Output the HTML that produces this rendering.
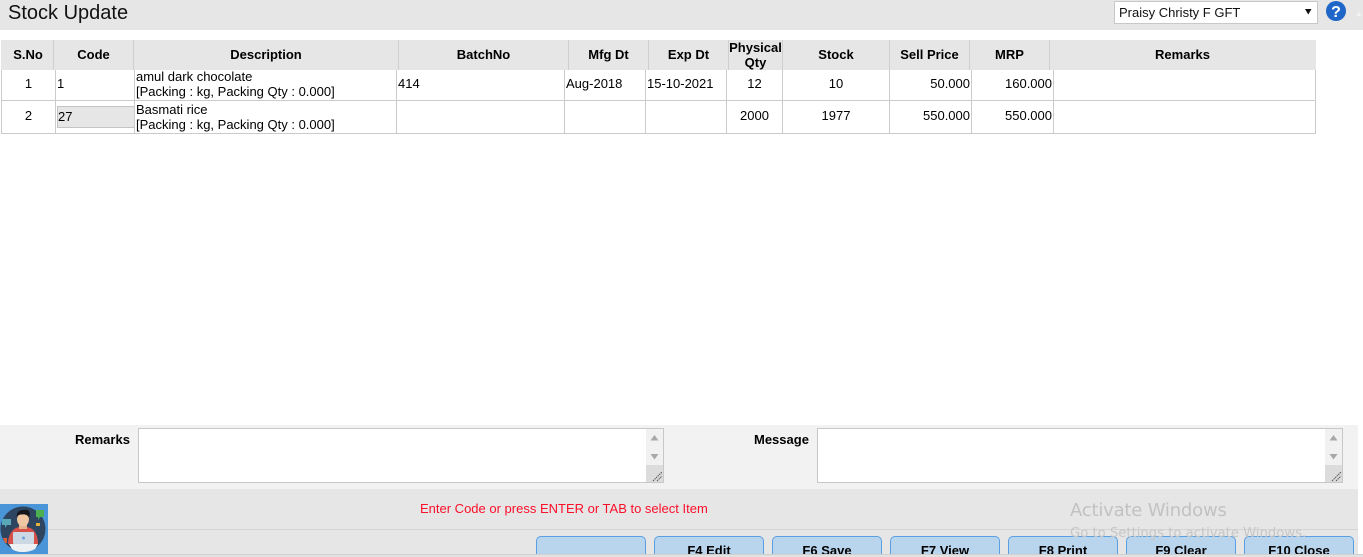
<!DOCTYPE html>
<html>
<head>
<meta charset="utf-8">
<style>
html,body{margin:0;padding:0;width:1363px;height:557px;overflow:hidden;background:#fff;font-family:"Liberation Sans",Arial,sans-serif;font-size:13px;color:#000}
#page{position:absolute;left:0;top:0;width:1363px;height:557px;overflow:hidden}
#clip{position:absolute;left:0;top:0;width:1363px;height:554px;overflow:hidden}
.a{position:absolute;white-space:nowrap}
.bg{position:absolute}
.h{position:absolute;top:40px;height:30px;line-height:29px;font-weight:bold;text-align:center;color:#000}
.t{position:absolute;white-space:nowrap;line-height:16px}
.c{text-align:center}
.r{text-align:right}
.btn{position:absolute;top:536px;width:108px;height:30px;background:#b9d4ed;border:1px solid #5a9fe0;border-radius:5px;text-align:center;font-weight:bold;line-height:27px;color:#000}
.ta{position:absolute;top:428px;height:53px;background:#fff;border:1px solid #c8c8c8}
.sb{position:absolute;top:0;right:0;width:17px;height:53px;background:#f1f1f1}
.grip{position:absolute;right:0;bottom:0;width:17px;height:17px;background:#dcdcdc}
</style>
</head>
<body>
<div id="page">
<div id="clip">
<div class="bg" style="left:0;top:0;width:1363px;height:30px;background:#e6e6e6"></div>
<div class="a" style="left:8px;top:1px;font-size:20px;line-height:24px;color:#111">Stock Update</div>

<div class="a" style="left:1114px;top:1px;width:202px;height:21px;background:#fff;border:1px solid #c8c8c8;line-height:21px;text-indent:4px;color:#111">Praisy Christy F GFT</div>
<svg class="a" style="left:1305px;top:9px" width="7" height="6"><path d="M0 0H6.500L3.250 5.500Z" fill="#111"/></svg>
<svg class="a" style="left:1326px;top:1px" width="20" height="20"><circle cx="10" cy="10" r="10" fill="#1e66c8"/><text x="10" y="16" font-family="Liberation Sans" font-size="16" font-weight="bold" fill="#fff" text-anchor="middle">?</text></svg>
<svg class="a" style="left:1356px;top:11px" width="5" height="5"><path d="M0 5L3 0L5 5Z" fill="#f2f2f2"/></svg>

<!-- table header -->
<div class="bg" style="left:1px;top:40px;width:1315px;height:30px;background:#e6e6e6"></div>
<div class="bg" style="left:53px;top:40px;width:1px;height:30px;background:#cfcfcf"></div>
<div class="bg" style="left:133px;top:40px;width:1px;height:30px;background:#cfcfcf"></div>
<div class="bg" style="left:398px;top:40px;width:1px;height:30px;background:#cfcfcf"></div>
<div class="bg" style="left:568px;top:40px;width:1px;height:30px;background:#cfcfcf"></div>
<div class="bg" style="left:648px;top:40px;width:1px;height:30px;background:#cfcfcf"></div>
<div class="bg" style="left:728px;top:40px;width:1px;height:30px;background:#cfcfcf"></div>
<div class="bg" style="left:782px;top:40px;width:1px;height:30px;background:#cfcfcf"></div>
<div class="bg" style="left:889px;top:40px;width:1px;height:30px;background:#cfcfcf"></div>
<div class="bg" style="left:969px;top:40px;width:1px;height:30px;background:#cfcfcf"></div>
<div class="bg" style="left:1049px;top:40px;width:1px;height:30px;background:#cfcfcf"></div>

<div class="h" style="left:2px;width:52px">S.No</div>
<div class="h" style="left:54px;width:79px">Code</div>
<div class="h" style="left:134px;width:264px">Description</div>
<div class="h" style="left:399px;width:169px">BatchNo</div>
<div class="h" style="left:569px;width:79px">Mfg Dt</div>
<div class="h" style="left:649px;width:79px">Exp Dt</div>
<div class="h" style="left:729px;width:53px;line-height:15px">Physical<br>Qty</div>
<div class="h" style="left:783px;width:106px">Stock</div>
<div class="h" style="left:890px;width:79px">Sell Price</div>
<div class="h" style="left:970px;width:79px">MRP</div>
<div class="h" style="left:1050px;width:265px">Remarks</div>

<!-- grid -->
<div class="bg" style="left:1px;top:100px;width:1315px;height:1px;background:#cbcbcb"></div>
<div class="bg" style="left:1px;top:133px;width:1315px;height:1px;background:#cbcbcb"></div>
<div class="bg" style="left:1px;top:70px;width:1px;height:64px;background:#cbcbcb"></div>
<div class="bg" style="left:55px;top:70px;width:1px;height:64px;background:#cbcbcb"></div>
<div class="bg" style="left:134px;top:70px;width:1px;height:64px;background:#cbcbcb"></div>
<div class="bg" style="left:396px;top:70px;width:1px;height:64px;background:#cbcbcb"></div>
<div class="bg" style="left:564px;top:70px;width:1px;height:64px;background:#cbcbcb"></div>
<div class="bg" style="left:645px;top:70px;width:1px;height:64px;background:#cbcbcb"></div>
<div class="bg" style="left:726px;top:70px;width:1px;height:64px;background:#cbcbcb"></div>
<div class="bg" style="left:782px;top:70px;width:1px;height:64px;background:#cbcbcb"></div>
<div class="bg" style="left:889px;top:70px;width:1px;height:64px;background:#cbcbcb"></div>
<div class="bg" style="left:971px;top:70px;width:1px;height:64px;background:#cbcbcb"></div>
<div class="bg" style="left:1053px;top:70px;width:1px;height:64px;background:#cbcbcb"></div>
<div class="bg" style="left:1315px;top:70px;width:1px;height:64px;background:#cbcbcb"></div>

<!-- row 1 -->
<div class="t c" style="left:2px;width:53px;top:76px">1</div>
<div class="t" style="left:57px;top:76px">1</div>
<div class="t" style="left:136px;top:69px;line-height:15px">amul dark chocolate<br>[Packing : kg, Packing Qty : 0.000]</div>
<div class="t" style="left:398px;top:76px">414</div>
<div class="t" style="left:566px;top:76px">Aug-2018</div>
<div class="t" style="left:647px;top:76px">15-10-2021</div>
<div class="t c" style="left:727px;width:55px;top:76px">12</div>
<div class="t c" style="left:783px;width:106px;top:76px">10</div>
<div class="t r" style="left:890px;width:80px;top:76px">50.000</div>
<div class="t r" style="left:972px;width:80px;top:76px">160.000</div>

<!-- row 2 -->
<div class="t c" style="left:2px;width:53px;top:108px">2</div>
<div class="bg" style="left:57px;top:106px;width:76px;height:20px;background:#e6e6e6;border:1px solid #c4c4c4;border-right:0"></div>
<div class="t" style="left:58px;top:109px">27</div>
<div class="t" style="left:136px;top:102px;line-height:15px">Basmati rice<br>[Packing : kg, Packing Qty : 0.000]</div>
<div class="t c" style="left:727px;width:55px;top:108px">2000</div>
<div class="t c" style="left:783px;width:106px;top:108px">1977</div>
<div class="t r" style="left:890px;width:80px;top:108px">550.000</div>
<div class="t r" style="left:972px;width:80px;top:108px">550.000</div>

<!-- bottom panels -->
<div class="bg" style="left:0;top:425px;width:1358px;height:64px;background:#f2f2f2"></div>
<div class="bg" style="left:0;top:489px;width:1358px;height:65px;background:#e6e6e6"></div>
<div class="bg" style="left:0;top:529px;width:1358px;height:1px;background:#d4d4d4"></div>

<div class="a" style="left:75px;top:432px;font-weight:bold;line-height:16px">Remarks</div>
<div class="ta" style="left:138px;width:524px">
  <div class="sb">
    <svg style="position:absolute;left:4px;top:6px" width="9" height="26"><path d="M.5 5.500L4.500 0L8.500 5.500Z" fill="#a8a8a8"/><path d="M.5 19H8.500L4.500 24.500Z" fill="#a8a8a8"/></svg>
    <div class="grip"><svg width="17" height="17" style="display:block"><path d="M7 16L16 7M11 16L16 11" stroke="#555" stroke-width="1" stroke-dasharray="1.500 .7"/></svg></div>
  </div>
</div>
<div class="a" style="left:754px;top:432px;font-weight:bold;line-height:16px">Message</div>
<div class="ta" style="left:817px;width:524px">
  <div class="sb">
    <svg style="position:absolute;left:4px;top:6px" width="9" height="26"><path d="M.5 5.500L4.500 0L8.500 5.500Z" fill="#a8a8a8"/><path d="M.5 19H8.500L4.500 24.500Z" fill="#a8a8a8"/></svg>
    <div class="grip"><svg width="17" height="17" style="display:block"><path d="M7 16L16 7M11 16L16 11" stroke="#555" stroke-width="1" stroke-dasharray="1.500 .7"/></svg></div>
  </div>
</div>

<div class="a" style="left:420px;top:501px;color:#fb0f2a;line-height:16px">Enter Code or press ENTER or TAB to select Item</div>

<!-- buttons -->
<div class="btn" style="left:536px"></div>
<div class="btn" style="left:654px">F4 Edit</div>
<div class="btn" style="left:772px">F6 Save</div>
<div class="btn" style="left:890px">F7 View</div>
<div class="btn" style="left:1008px">F8 Print</div>
<div class="btn" style="left:1126px">F9 Clear</div>
<div class="btn" style="left:1244px">F10 Close</div>

<!-- watermark -->
<div class="a" style="left:1070px;top:499px;font-family:'DejaVu Sans','Liberation Sans',sans-serif;font-size:18px;line-height:24px;color:#c2c2c2;letter-spacing:-.2px">Activate Windows</div>
<div class="a" style="left:1070px;top:525px;font-family:'DejaVu Sans','Liberation Sans',sans-serif;font-size:13.200px;line-height:18px;color:#c6c6c6;letter-spacing:0">Go to Settings to activate Windows.</div>

<!-- avatar -->
<svg class="a" style="left:0;top:504px" width="48" height="50" viewBox="0 0 48 50">
  <rect width="48" height="50" fill="#4a94d8"/>
  <circle cx="23" cy="25" r="22.500" fill="#2e4560"/>
  <path d="M8 40C8 29 14 24 19 23H27C33 24 38 29 38 40Z" fill="#d8504a"/>
  <rect x="19" y="17" width="8" height="8" fill="#e4b48e"/>
  <ellipse cx="23" cy="15" rx="6" ry="7.500" fill="#efc7a3"/>
  <path d="M17 14C16 8 19 6 24 6C29 5 31 8 29 14C28 11 25 10 22 10.500C19 10.500 18 11 17 14Z" fill="#15151c"/>
  <rect x="13" y="28" width="21" height="12" rx="1" fill="#ccd8e3"/>
  <circle cx="23.500" cy="34" r="1.500" fill="#6aa4dc"/>
  <path d="M9 40H38L35 45C28 49 17 49 12 45Z" fill="#eef1f3"/>
  <path d="M36 6H44V13H40L38 16V13H36Z" fill="#4caf50"/>
  <path d="M2 15H11V21H7L5 24V21H2Z" fill="#58a8b8"/>
  <path d="M36 19H40V22H36Z" fill="#e0b040"/>
  <path d="M3 34H7V39H5Z" fill="#d8603c"/>
</svg>
</div>

<!-- bottom strip -->
<div class="bg" style="left:0;top:554px;width:1363px;height:3px;background:#e2e2e2;border-top:1px solid #d0d0d0;box-sizing:border-box"></div>
</div>
</body>
</html>
